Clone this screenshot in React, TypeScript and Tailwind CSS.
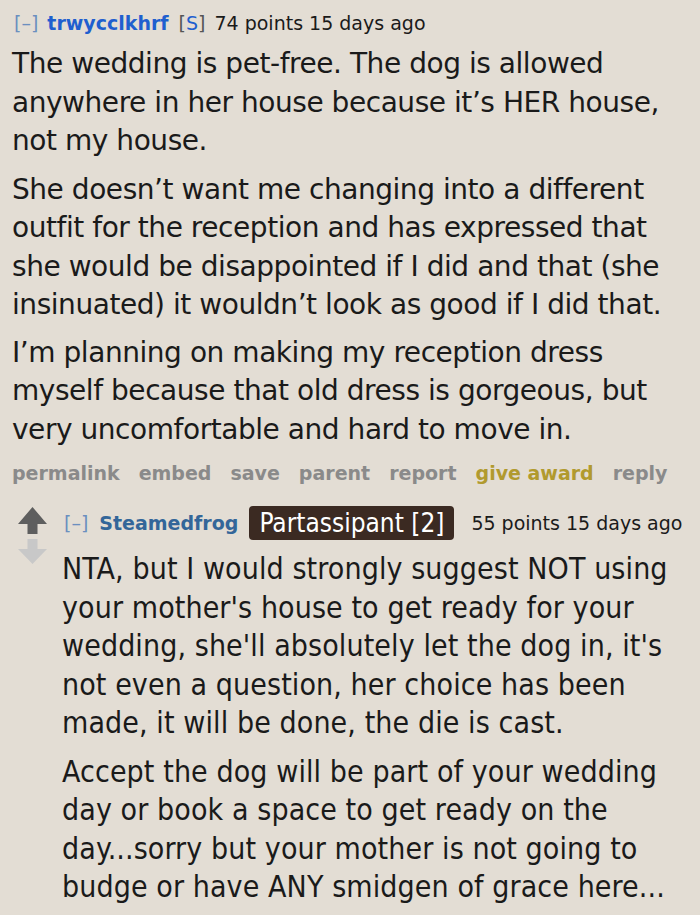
import React from "react";

const font = { fontFamily: '"DejaVu Sans", Verdana, sans-serif' };
const cond = { fontFamily: '"DejaVu Sans", Tahoma, sans-serif', fontStretch: "condensed" as const };

export default function App() {
  return (
    <div className="w-[700px] h-[915px] bg-[#e3ddd4] overflow-hidden text-[#1a1a1a]" style={font}>
      <div className="pl-[12px] pr-0 pt-[10px]">
        <div className="flex items-baseline gap-[9px] text-[19px] leading-[26px] pl-[2px]">
          <span className="text-[#6b8fbf]">[–]</span>
          <span className="font-bold text-[#1f5fcf]">trwycclkhrf</span>
          <span className="ml-[1px]"><span className="text-[#555]">[</span><span className="text-[#1f5fcf]">S</span><span className="text-[#555]">]</span></span>
          <span>74 points 15 days ago</span>
        </div>
        <div className="text-[28px] leading-[38.5px] mt-[9px] tracking-[-0.45px] whitespace-nowrap">
          <p>The wedding is pet-free. The dog is allowed<br />anywhere in her house because it’s HER house,<br />not my house.</p>
          <p className="mt-[10px]">She doesn’t want me changing into a different<br />outfit for the reception and has expressed that<br />she would be disappointed if I did and that (she<br />insinuated) it wouldn’t look as good if I did that.</p>
          <p className="mt-[9px]">I’m planning on making my reception dress<br />myself because that old dress is gorgeous, but<br />very uncomfortable and hard to move in.</p>
        </div>
        <div className="flex gap-[19px] text-[19px] font-bold text-[#8a8a8a] mt-[11px] leading-[26px]">
          <span>permalink</span>
          <span>embed</span>
          <span>save</span>
          <span>parent</span>
          <span>report</span>
          <span className="text-[#b19a2e]">give award</span>
          <span>reply</span>
        </div>
      </div>
      <div className="flex mt-[20px] pl-[18px]">
        <div className="flex flex-col items-center w-[29px] pt-[1px] gap-[5px]">
          <svg width="29" height="27" viewBox="0 0 29 27">
            <path d="M14.5 0 L29 17 L19.5 17 L19.5 27 L9.5 27 L9.5 17 L0 17 Z" fill="#5e5e5e" />
          </svg>
          <svg width="29" height="25" viewBox="0 0 29 25">
            <path d="M9.5 0 L19.5 0 L19.5 10 L29 10 L14.5 25 L0 10 L9.5 10 Z" fill="#c8c8c8" />
          </svg>
        </div>
        <div className="ml-[15px] flex-1">
          <div className="flex items-center text-[19px] leading-[26px]">
            <span className="text-[#6b8fbf] ml-[2px]">[–]</span>
            <span className="font-bold text-[#336699] ml-[11px]">Steamedfrog</span>
            <span className="ml-[11px] bg-[#3b2a22] text-white rounded-[4px] px-[10px] text-[26px] leading-[34px]" style={cond}>Partassipant [2]</span>
            <span className="ml-[17px]">55 points 15 days ago</span>
          </div>
          <div className="text-[30px] leading-[38.5px] mt-[10px] tracking-[0.1px] whitespace-nowrap" style={cond}>
            <p>NTA, but I would strongly suggest NOT using<br />your mother's house to get ready for your<br />wedding, she'll absolutely let the dog in, it's<br />not even a question, her choice has been<br />made, it will be done, the die is cast.</p>
            <p className="mt-[10px]">Accept the dog will be part of your wedding<br />day or book a space to get ready on the<br />day...sorry but your mother is not going to<br />budge or have ANY smidgen of grace here...</p>
          </div>
        </div>
      </div>
    </div>
  );
}
